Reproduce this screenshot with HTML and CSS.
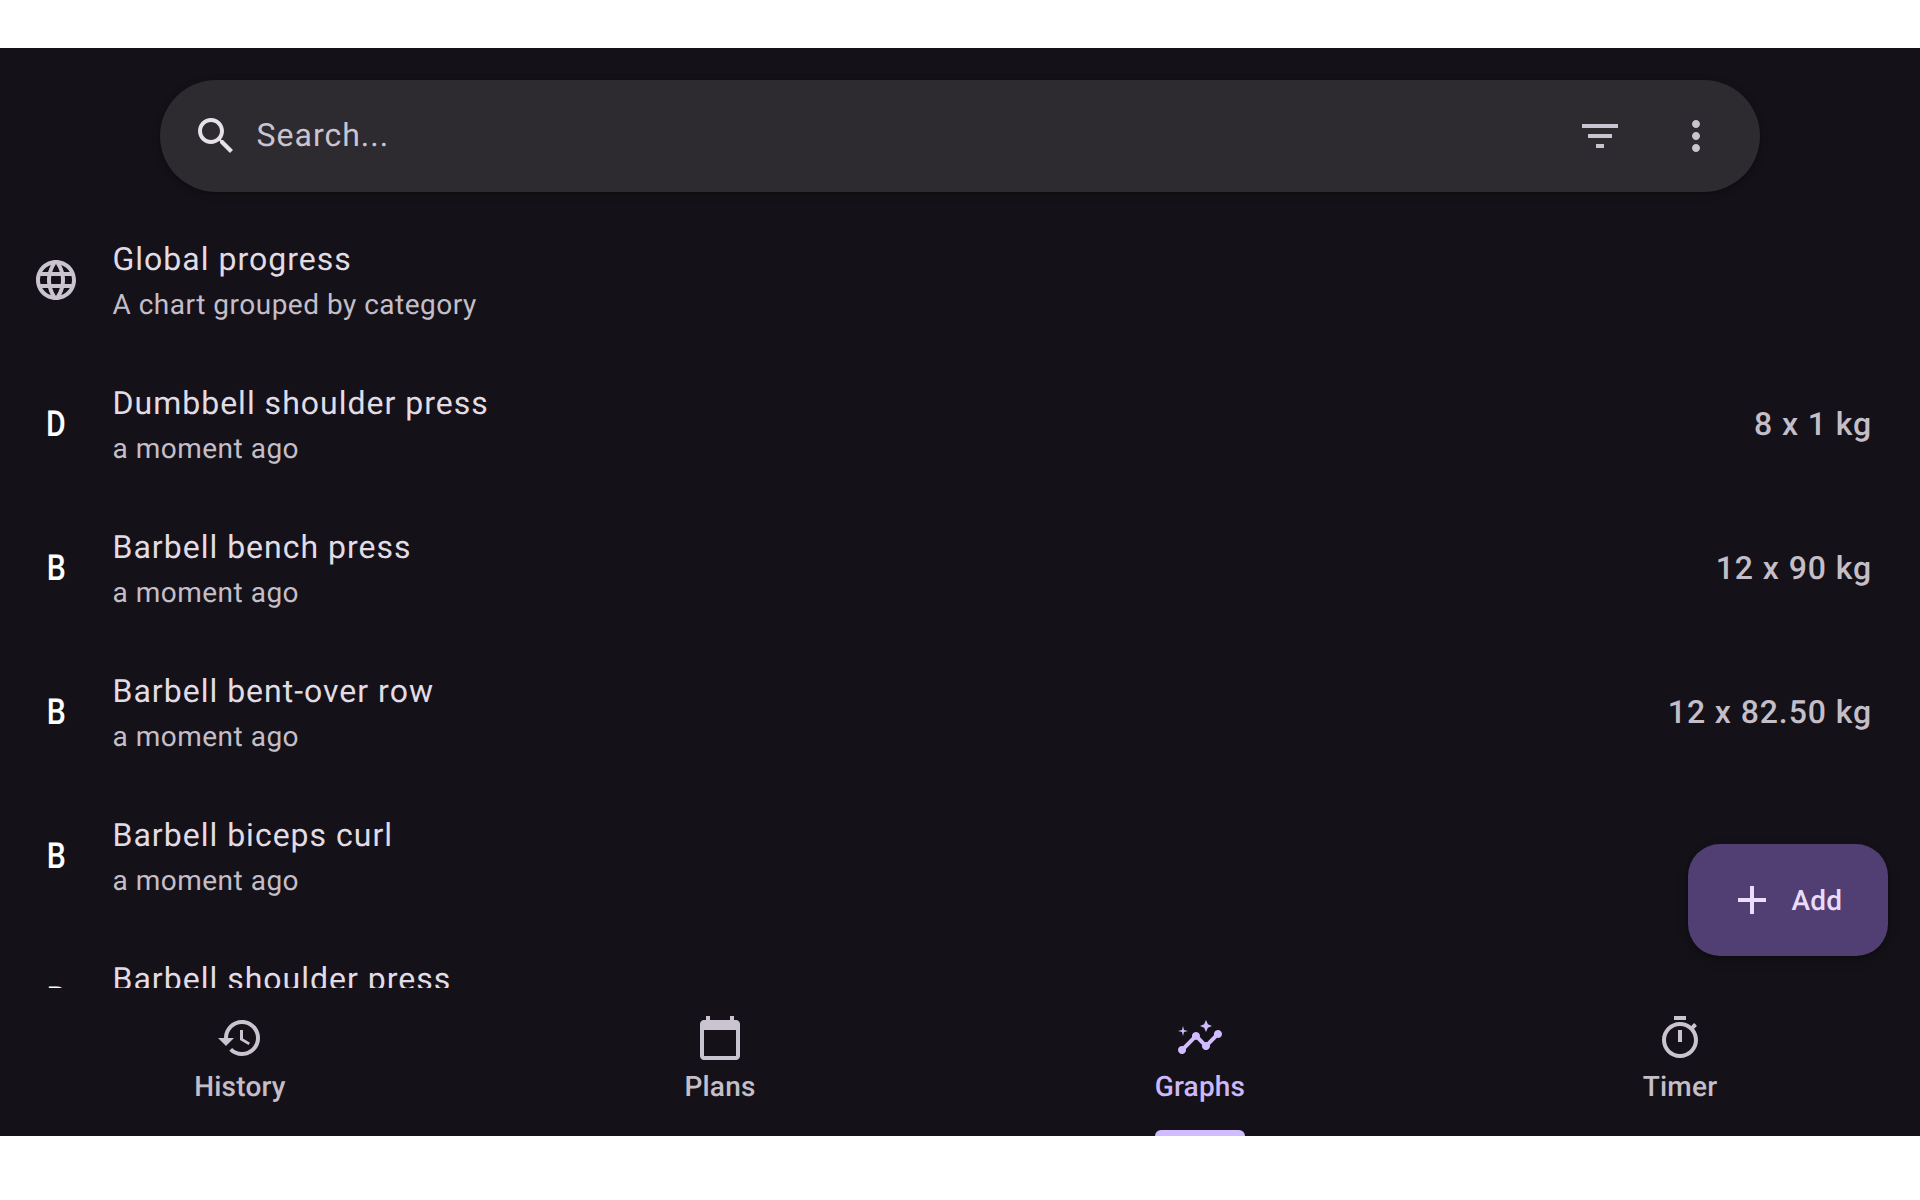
FILE: index.html
```html
<!DOCTYPE html>
<html lang="en">
<head>
<meta charset="utf-8">
<title>Graphs</title>
<link rel="stylesheet" href="styles.css">
</head>
<body>
<main class="app">
  <div class="search-wrap">
    <div class="search">
      <svg class="icon icon-strong" viewBox="0 0 24 24"><path d="M15.5 14h-.79l-.28-.27C15.41 12.59 16 11.11 16 9.5 16 5.91 13.09 3 9.5 3S3 5.91 3 9.5 5.91 16 9.5 16c1.61 0 3.09-.59 4.23-1.57l.27.28v.79l5 4.99L20.49 19l-4.99-5zm-6 0C7.01 14 5 11.99 5 9.5S7.01 5 9.5 5 14 7.01 14 9.5 11.99 14 9.5 14z"/></svg>
      <span class="search-text">Search...</span>
      <svg class="icon" viewBox="0 0 24 24"><path d="M10 18h4v-2h-4v2zM3 6v2h18V6H3zm3 7h12v-2H6v2z"/></svg>
      <svg class="icon" viewBox="0 0 24 24"><path d="M12 8c1.1 0 2-.9 2-2s-.9-2-2-2-2 .9-2 2 .9 2 2 2zm0 2c-1.1 0-2 .9-2 2s.9 2 2 2 2-.9 2-2-.9-2-2-2zm0 6c-1.1 0-2 .9-2 2s.9 2 2 2 2-.9 2-2-.9-2-2-2z"/></svg>
    </div>
  </div>

  <div class="list">
    <div class="row">
      <div class="lead"><svg class="icon" viewBox="0 0 24 24"><path d="M11.99 2C6.47 2 2 6.48 2 12s4.47 10 9.99 10C17.52 22 22 17.52 22 12S17.52 2 11.99 2zm6.93 6h-2.95c-.32-1.25-.78-2.45-1.38-3.56 1.84.63 3.37 1.91 4.33 3.56zM12 4.04c.83 1.2 1.48 2.53 1.91 3.96h-3.82c.43-1.43 1.08-2.76 1.91-3.96zM4.26 14C4.1 13.36 4 12.69 4 12s.1-1.36.26-2h3.38c-.08.66-.14 1.32-.14 2 0 .68.06 1.34.14 2H4.26zm.82 2h2.95c.32 1.25.78 2.45 1.38 3.56-1.84-.63-3.37-1.9-4.33-3.56zm2.95-8H5.08c.96-1.66 2.49-2.93 4.33-3.56C8.81 5.55 8.35 6.75 8.03 8zM12 19.96c-.83-1.2-1.48-2.53-1.91-3.96h3.82c-.43 1.43-1.08 2.76-1.91 3.96zM14.34 14H9.66c-.09-.66-.16-1.32-.16-2 0-.68.07-1.35.16-2h4.68c.09.65.16 1.32.16 2 0 .68-.07 1.34-.16 2zm.25 5.56c.6-1.11 1.06-2.31 1.38-3.56h2.95c-.96 1.65-2.49 2.93-4.33 3.56zM16.36 14c.08-.66.14-1.32.14-2 0-.68-.06-1.34-.14-2h3.38c.16.64.26 1.31.26 2s-.1 1.36-.26 2h-3.38z"/></svg></div>
      <div class="body"><div class="title">Global progress</div><div class="sub">A chart grouped by category</div></div>
    </div>
    <div class="row">
      <div class="lead"><span class="letter">D</span></div>
      <div class="body"><div class="title">Dumbbell shoulder press</div><div class="sub">a moment ago</div></div>
      <div class="trail">8 x 1 kg</div>
    </div>
    <div class="row">
      <div class="lead"><span class="letter">B</span></div>
      <div class="body"><div class="title">Barbell bench press</div><div class="sub">a moment ago</div></div>
      <div class="trail">12 x 90 kg</div>
    </div>
    <div class="row">
      <div class="lead"><span class="letter">B</span></div>
      <div class="body"><div class="title">Barbell bent-over row</div><div class="sub">a moment ago</div></div>
      <div class="trail">12 x 82.50 kg</div>
    </div>
    <div class="row">
      <div class="lead"><span class="letter">B</span></div>
      <div class="body"><div class="title">Barbell biceps curl</div><div class="sub">a moment ago</div></div>
    </div>
    <div class="row">
      <div class="lead"><span class="letter">B</span></div>
      <div class="body"><div class="title">Barbell shoulder press</div><div class="sub">a moment ago</div></div>
    </div>
  </div>

  <nav class="nav">
    <div class="tab">
      <svg class="icon" viewBox="0 0 24 24"><path d="M13 3c-4.97 0-9 4.03-9 9H1l3.89 3.89.07.14L9 12H6c0-3.87 3.13-7 7-7s7 3.13 7 7-3.13 7-7 7c-1.93 0-3.68-.79-4.94-2.06l-1.42 1.42C8.27 19.99 10.51 21 13 21c4.97 0 9-4.03 9-9s-4.03-9-9-9zm-1 5v5l4.28 2.54.72-1.21-3.5-2.08V8H12z"/></svg>
      <div class="tab-label">History</div>
    </div>
    <div class="tab">
      <svg class="icon" viewBox="0 0 24 24"><path d="M20 3h-1V1h-2v2H7V1H5v2H4c-1.1 0-2 .9-2 2v16c0 1.1.9 2 2 2h16c1.1 0 2-.9 2-2V5c0-1.1-.9-2-2-2zm0 18H4V8h16v13z"/></svg>
      <div class="tab-label">Plans</div>
    </div>
    <div class="tab tab-active">
      <svg class="icon" viewBox="0 0 24 24"><path d="M21 8c-1.45 0-2.26 1.44-1.93 2.51l-3.55 3.56c-.3-.09-.74-.09-1.04 0l-2.55-2.55C12.27 10.45 11.46 9 10 9c-1.45 0-2.27 1.44-1.93 2.52l-4.56 4.55C2.44 15.74 1 16.55 1 18c0 1.1.9 2 2 2 1.45 0 2.26-1.44 1.93-2.51l4.55-4.56c.3.09.74.09 1.04 0l2.55 2.55C12.73 16.55 13.54 18 15 18c1.45 0 2.27-1.44 1.93-2.52l3.56-3.55c1.07.33 2.51-.48 2.51-1.93 0-1.1-.9-2-2-2z"/><path d="M15 9l.94-2.07L18 6l-2.06-.93L15 3l-.92 2.07L12 6l2.08.93z"/><path d="M3.5 11 4 9l2-.5L4 8l-.5-2L3 8l-2 .5L3 9z"/></svg>
      <div class="tab-label">Graphs<div class="indicator"></div></div>
    </div>
    <div class="tab">
      <svg class="icon" viewBox="0 0 24 24"><path d="M9 1h6v2H9zm10.03 6.39 1.42-1.42c-.43-.51-.9-.99-1.41-1.41l-1.42 1.42C16.07 4.74 14.12 4 12 4c-4.97 0-9 4.03-9 9s4.02 9 9 9 9-4.03 9-9c0-2.12-.74-4.07-1.97-5.61zM12 20c-3.87 0-7-3.13-7-7s3.13-7 7-7 7 3.13 7 7-3.13 7-7 7zm-1-12h2v6h-2z"/></svg>
      <div class="tab-label">Timer</div>
    </div>
  </nav>

  <button class="fab" type="button">
    <svg class="icon" viewBox="0 0 24 24"><path d="M19 13h-6v6h-2v-6H5v-2h6V5h2v6h6v2z"/></svg>
    <span>Add</span>
  </button>
</main>
</body>
</html>
```
FILE: styles.css
```css
* { box-sizing: border-box; }

html, body {
  margin: 0;
  padding: 0;
  background: #ffffff;
}

body {
  padding-top: 48px;
  height: 1200px;
  overflow: hidden;
  font-family: Roboto, "Liberation Sans", sans-serif;
  text-rendering: geometricPrecision;
}

.app {
  position: relative;
  display: flex;
  flex-direction: column;
  height: 1088px;
  background: #141218;
  color: #e6e0e9;
}

.icon {
  display: block;
  flex: none;
  width: 48px;
  height: 48px;
  fill: #cac4d0;
}

.icon-strong { fill: #e6e0e9; }

/* search */
.search-wrap { padding: 32px 160px 0; flex: none; }

.search {
  display: flex;
  align-items: center;
  gap: 48px;
  height: 112px;
  padding: 0 40px 0 32px;
  border-radius: 56px;
  background: #2d2b30;
  box-shadow: 0 2px 6px 2px rgba(0, 0, 0, .15), 0 1px 2px rgba(0, 0, 0, .3);
}

.search-text {
  flex: 1;
  margin: -2px 0 0 -31.5px;
  font-size: 32px;
  letter-spacing: 1px;
  color: #cac4d0;
}

/* list */
.list {
  flex: 1;
  min-height: 0;
  margin-top: 16px;
  overflow: hidden;
}

.row {
  display: flex;
  align-items: center;
  height: 144px;
  padding: 0 48px 0 32px;
}

.lead {
  flex: none;
  display: flex;
  justify-content: center;
  width: 48px;
  margin-right: 32.5px;
}

.letter {
  display: block;
  font-size: 36px;
  line-height: 48px;
  font-weight: 500;
  color: #ffffff;
  transform: scaleX(.84);
}

.body { flex: 1; min-width: 0; }

.title {
  margin-bottom: 2px;
  font-size: 32px;
  line-height: 48px;
  letter-spacing: 1px;
  color: #e2dce5;
}

.sub {
  font-size: 28px;
  line-height: 40px;
  letter-spacing: .5px;
  color: #c4bec9;
}

.trail {
  flex: none;
  font-size: 32px;
  font-weight: 500;
  letter-spacing: .9px;
  color: #c4bec9;
}

/* bottom navigation */
.nav {
  flex: none;
  display: grid;
  grid-template-columns: repeat(4, 1fr);
  height: 148px;
  padding-top: 26px;
}

.tab {
  display: flex;
  flex-direction: column;
  align-items: center;
  gap: 5px;
  color: #c4bec9;
}

.tab-label {
  font-size: 28px;
  line-height: 40px;
  font-weight: 500;
  letter-spacing: .2px;
}

.tab-active { color: #cdb9fa; }
.tab-active .icon { fill: #d0bcff; }

.indicator {
  height: 6px;
  margin-top: 23px;
  border-radius: 6px 6px 0 0;
  background: #d0bcff;
}

/* floating action button */
.fab {
  position: absolute;
  right: 32px;
  bottom: 180px;
  display: flex;
  align-items: center;
  gap: 16px;
  width: 200px;
  height: 112px;
  padding: 0 0 0 39.5px;
  border: 0;
  border-radius: 32px;
  background: #513e73;
  color: #e8dcfb;
  font-family: inherit;
  font-size: 28px;
  font-weight: 500;
  letter-spacing: .2px;
  text-rendering: inherit;
  box-shadow: 0 4px 8px 3px rgba(0, 0, 0, .15), 0 1px 3px rgba(0, 0, 0, .3);
}

.fab .icon { fill: #eaddff; }
```
